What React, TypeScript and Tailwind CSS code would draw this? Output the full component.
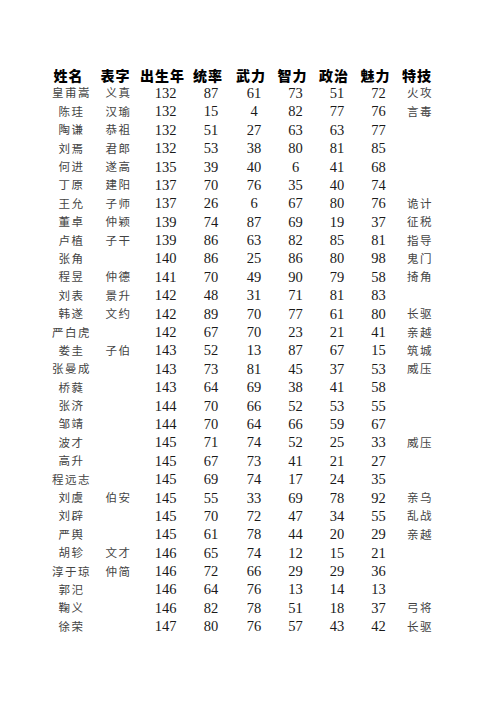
type Row = [string, string, number, number, number, number, number, number, string]

const rows: Row[] = [
  ['皇甫嵩', '义真', 132, 87, 61, 73, 51, 72, '火攻'],
  ['陈珪', '汉瑜', 132, 15, 4, 82, 77, 76, '言毒'],
  ['陶谦', '恭祖', 132, 51, 27, 63, 63, 77, ''],
  ['刘焉', '君郎', 132, 53, 38, 80, 81, 85, ''],
  ['何进', '遂高', 135, 39, 40, 6, 41, 68, ''],
  ['丁原', '建阳', 137, 70, 76, 35, 40, 74, ''],
  ['王允', '子师', 137, 26, 6, 67, 80, 76, '诡计'],
  ['董卓', '仲颖', 139, 74, 87, 69, 19, 37, '征税'],
  ['卢植', '子干', 139, 86, 63, 82, 85, 81, '指导'],
  ['张角', '', 140, 86, 25, 86, 80, 98, '鬼门'],
  ['程昱', '仲德', 141, 70, 49, 90, 79, 58, '掎角'],
  ['刘表', '景升', 142, 48, 31, 71, 81, 83, ''],
  ['韩遂', '文约', 142, 89, 70, 77, 61, 80, '长驱'],
  ['严白虎', '', 142, 67, 70, 23, 21, 41, '亲越'],
  ['娄圭', '子伯', 143, 52, 13, 87, 67, 15, '筑城'],
  ['张曼成', '', 143, 73, 81, 45, 37, 53, '威压'],
  ['桥蕤', '', 143, 64, 69, 38, 41, 58, ''],
  ['张济', '', 144, 70, 66, 52, 53, 55, ''],
  ['邹靖', '', 144, 70, 64, 66, 59, 67, ''],
  ['波才', '', 145, 71, 74, 52, 25, 33, '威压'],
  ['高升', '', 145, 67, 73, 41, 21, 27, ''],
  ['程远志', '', 145, 69, 74, 17, 24, 35, ''],
  ['刘虞', '伯安', 145, 55, 33, 69, 78, 92, '亲乌'],
  ['刘辟', '', 145, 70, 72, 47, 34, 55, '乱战'],
  ['严舆', '', 145, 61, 78, 44, 20, 29, '亲越'],
  ['胡轸', '文才', 146, 65, 74, 12, 15, 21, ''],
  ['淳于琼', '仲简', 146, 72, 66, 29, 29, 36, ''],
  ['郭汜', '', 146, 64, 76, 13, 14, 13, ''],
  ['鞠义', '', 146, 82, 78, 51, 18, 37, '弓将'],
  ['徐荣', '', 147, 80, 76, 57, 43, 42, '长驱'],
]

const headers = ['姓名', '表字', '出生年', '统率', '武力', '智力', '政治', '魅力', '特技']
const widths = ['w-[47px]', 'w-[47px]', 'w-[47px]', 'w-[44px]', 'w-[42px]', 'w-[41px]', 'w-[42px]', 'w-[41px]', 'w-[42px]']

const cjk = "font-['Noto_Sans_CJK_SC',serif]"
const num = "font-['Liberation_Serif',serif]"

export default function App() {
  return (
    <div className="h-[707px] w-[500px] bg-white pt-[66px]">
      <div className={`flex h-[18px] items-center pl-[45px] text-[14px] font-black leading-none tracking-[1px] text-black ${cjk}`}>
        {headers.map((h, i) => (
          <div key={h} className={`${widths[i]} shrink-0 text-center`}>
            {h}
          </div>
        ))}
      </div>
      <div className="pl-[48px]">
        {rows.map((r) => (
          <div key={r[0]} className="flex h-[18.4px] items-center leading-none text-[#2a2a2a]">
            {r.map((c, i) => (
              <div
                key={i}
                className={`${widths[i]} shrink-0 text-center ${
                  typeof c === 'number'
                    ? `${num} text-[14.5px] text-[#1a1a1a]`
                    : `${cjk} text-[11.5px] tracking-[1.5px] text-[#444]`
                }`}
              >
                {c}
              </div>
            ))}
          </div>
        ))}
      </div>
    </div>
  )
}
